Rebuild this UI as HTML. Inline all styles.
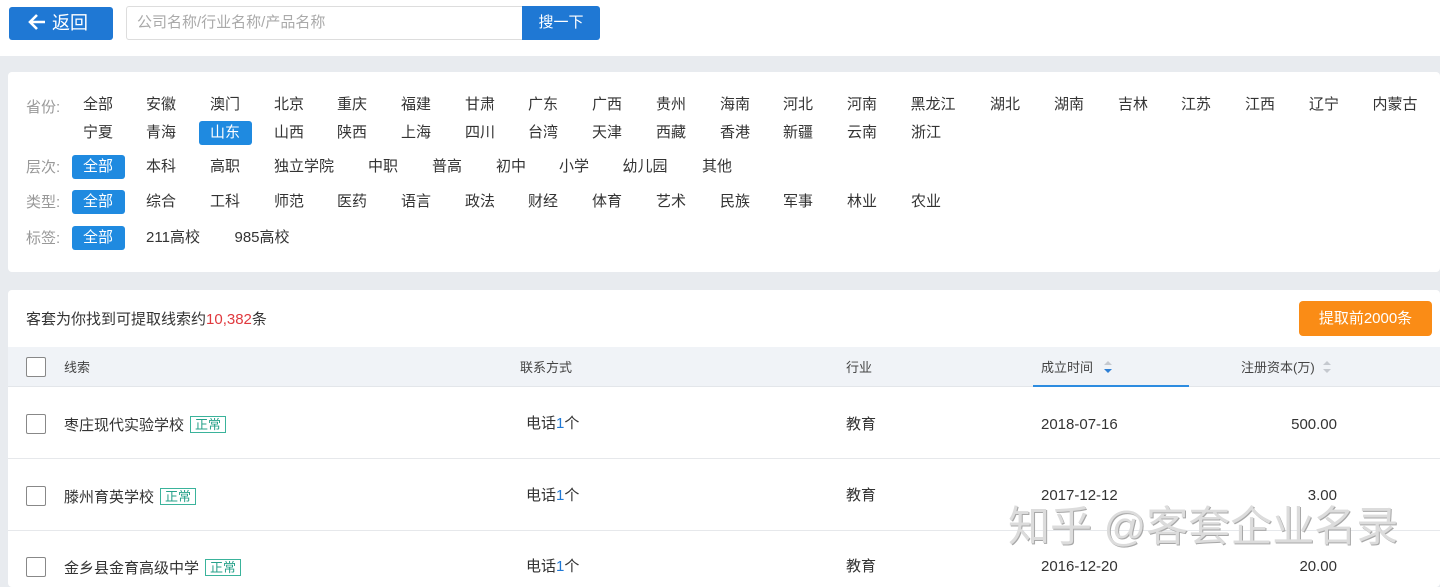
<!DOCTYPE html>
<html><head><meta charset="utf-8"><style>
*{margin:0;padding:0;box-sizing:border-box}
body{width:1440px;height:587px;overflow:hidden;background:#e8ebef;font-family:"Liberation Sans","Noto Sans CJK SC",sans-serif;position:relative;color:#333}
.a{position:absolute;white-space:nowrap}
.top{position:absolute;left:0;top:0;width:1440px;height:56px;background:#fff}
.card{position:absolute;left:8px;width:1432px;background:#fff;border-radius:4px}
.it{position:absolute;font-size:15px;line-height:24px;height:24px;text-align:center;color:#333;border-radius:3px}
.on{background:#1f8ae0;color:#fff}
.lab{position:absolute;left:26px;font-size:15px;color:#999;line-height:24px}
.cb{position:absolute;left:26px;width:20px;height:20px;border:1px solid #888;border-radius:2px;background:#fff}
.t{font-size:15px;color:#333;position:absolute;line-height:20px;white-space:nowrap}
.tag{display:inline-block;font-size:13px;color:#27a18a;border:1px solid #3ab39b;line-height:15px;padding:0 4px;margin-left:6px;vertical-align:1px}
.h{font-size:13px;color:#444;position:absolute;line-height:20px;top:358px}
.sep{position:absolute;left:8px;width:1432px;height:1px;background:#e6e8eb}
</style></head><body>
<div class="top"></div>
<div class="a" style="left:9px;top:7px;width:104px;height:33px;background:#1f78d4;border-radius:3px;color:#fff;font-size:18px;line-height:33px;padding-left:18px">
<svg width="20" height="18" viewBox="0 0 20 18" style="vertical-align:-2px"><path d="M18 9H4M10 2L3 9l7 7" stroke="#fff" stroke-width="2.6" fill="none"/></svg> 返回</div>
<div class="a" style="left:126px;top:6px;width:398px;height:34px;border:1px solid #ddd;border-radius:3px 0 0 3px;color:#aaa;font-size:15px;line-height:32px;padding-left:10px">公司名称/行业名称/产品名称</div>
<div class="a" style="left:522px;top:6px;width:78px;height:34px;background:#1f78d4;border-radius:0 3px 3px 0;color:#fff;font-size:15px;line-height:34px;text-align:center">搜一下</div>

<div class="card" style="top:72px;height:200px"></div>
<div class="lab" style="top:96px">省份:</div>
<div class="lab" style="top:156px">层次:</div>
<div class="lab" style="top:191px">类型:</div>
<div class="lab" style="top:227px">标签:</div>
<div id="rows"></div>

<div class="card" style="top:290px;height:297px"></div>
<div class="t" style="left:26px;top:310px">客套为你找到可提取线索约<span style="color:#e0393e">10,382</span>条</div>
<div class="a" style="left:1299px;top:301px;width:133px;height:35px;background:#fa8c16;border-radius:4px;color:#fff;font-size:15px;line-height:35px;text-align:center">提取前2000条</div>
<div class="a" style="left:8px;top:347px;width:1432px;height:40px;background:#f0f3f7;border-bottom:1px solid #e3e6ea"></div>
<div class="a" style="left:1033px;top:385px;width:156px;height:2px;background:#2d8ce0"></div>
<div class="cb" style="top:357px"></div>
<div class="h" style="left:64px">线索</div>
<div class="h" style="left:520px">联系方式</div>
<div class="h" style="left:846px">行业</div>
<div class="h" style="left:1041px">成立时间 <svg width="10" height="14" viewBox="0 0 10 14" style="margin-left:6px;vertical-align:-2px"><path d="M1 5L5 1L9 5Z" fill="#c5c9cf"/><path d="M1 9L5 13L9 9Z" fill="#2d7fd4"/></svg></div>
<div class="h" style="left:1241px">注册资本(万) <svg width="10" height="14" viewBox="0 0 10 14" style="margin-left:4px;vertical-align:-2px"><path d="M1 5L5 1L9 5Z" fill="#c5c9cf"/><path d="M1 9L5 13L9 9Z" fill="#c5c9cf"/></svg></div>

<div class="sep" style="top:458px"></div>
<div class="sep" style="top:530px"></div>

<div class="cb" style="top:414px"></div>
<div class="t" style="left:64px;top:416px">枣庄现代实验学校<span class="tag">正常</span></div>
<div class="t" style="left:526px;top:414px">电话<span style="color:#1f78d4">1</span>个</div>
<div class="t" style="left:846px;top:415px">教育</div>
<div class="t" style="left:1041px;top:415px">2018-07-16</div>
<div class="t" style="left:1237px;top:415px;width:100px;text-align:right">500.00</div>

<div class="cb" style="top:486px"></div>
<div class="t" style="left:64px;top:488px">滕州育英学校<span class="tag">正常</span></div>
<div class="t" style="left:526px;top:486px">电话<span style="color:#1f78d4">1</span>个</div>
<div class="t" style="left:846px;top:486px">教育</div>
<div class="t" style="left:1041px;top:486px">2017-12-12</div>
<div class="t" style="left:1237px;top:486px;width:100px;text-align:right">3.00</div>

<div class="cb" style="top:557px"></div>
<div class="t" style="left:64px;top:559px">金乡县金育高级中学<span class="tag">正常</span></div>
<div class="t" style="left:526px;top:557px">电话<span style="color:#1f78d4">1</span>个</div>
<div class="t" style="left:846px;top:557px">教育</div>
<div class="t" style="left:1041px;top:557px">2016-12-20</div>
<div class="t" style="left:1237px;top:557px;width:100px;text-align:right">20.00</div>

<div class="a" style="left:1008px;top:501px;font-size:42px;line-height:52px;color:#dcdcdc;text-shadow:1px 1px 0 #a8a8a8">知乎 @客套企业名录</div>

<script>
var c=[98,161,225,289,352,416,480,543,607,671,735,798,862,933,1005,1069,1133,1196,1260,1324,1395];
var rows=[
[93,"全部 安徽 澳门 北京 重庆 福建 甘肃 广东 广西 贵州 海南 河北 河南 黑龙江 湖北 湖南 吉林 江苏 江西 辽宁 内蒙古",-1],
[121,"宁夏 青海 山东 山西 陕西 上海 四川 台湾 天津 西藏 香港 新疆 云南 浙江",2],
[155,"全部 本科 高职 独立学院 中职 普高 初中 小学 幼儿园 其他",0],
[190,"全部 综合 工科 师范 医药 语言 政法 财经 体育 艺术 民族 军事 林业 农业",0],
[226,"全部 211高校 985高校",0]];
var cx3=[98,173,262];
var cx2=[98,161,225,304,383,447,511,574,645,717];
var h='';
rows.forEach(function(r,ri){r[1].split(' ').forEach(function(w,i){
var x=c[i];if(ri==2)x=cx2[i];if(ri==4)x=cx3[i];
if((ri==1||ri==3)&&i==13)x=926;
var wd=Math.max(53,w.length*16+6);if(/\d/.test(w))wd=70;
h+='<div class="it'+(i==r[2]?' on':'')+'" style="top:'+r[0]+'px;left:'+(x-wd/2)+'px;width:'+wd+'px">'+w+'</div>';});});
document.getElementById('rows').innerHTML=h;
</script>
</body></html>
